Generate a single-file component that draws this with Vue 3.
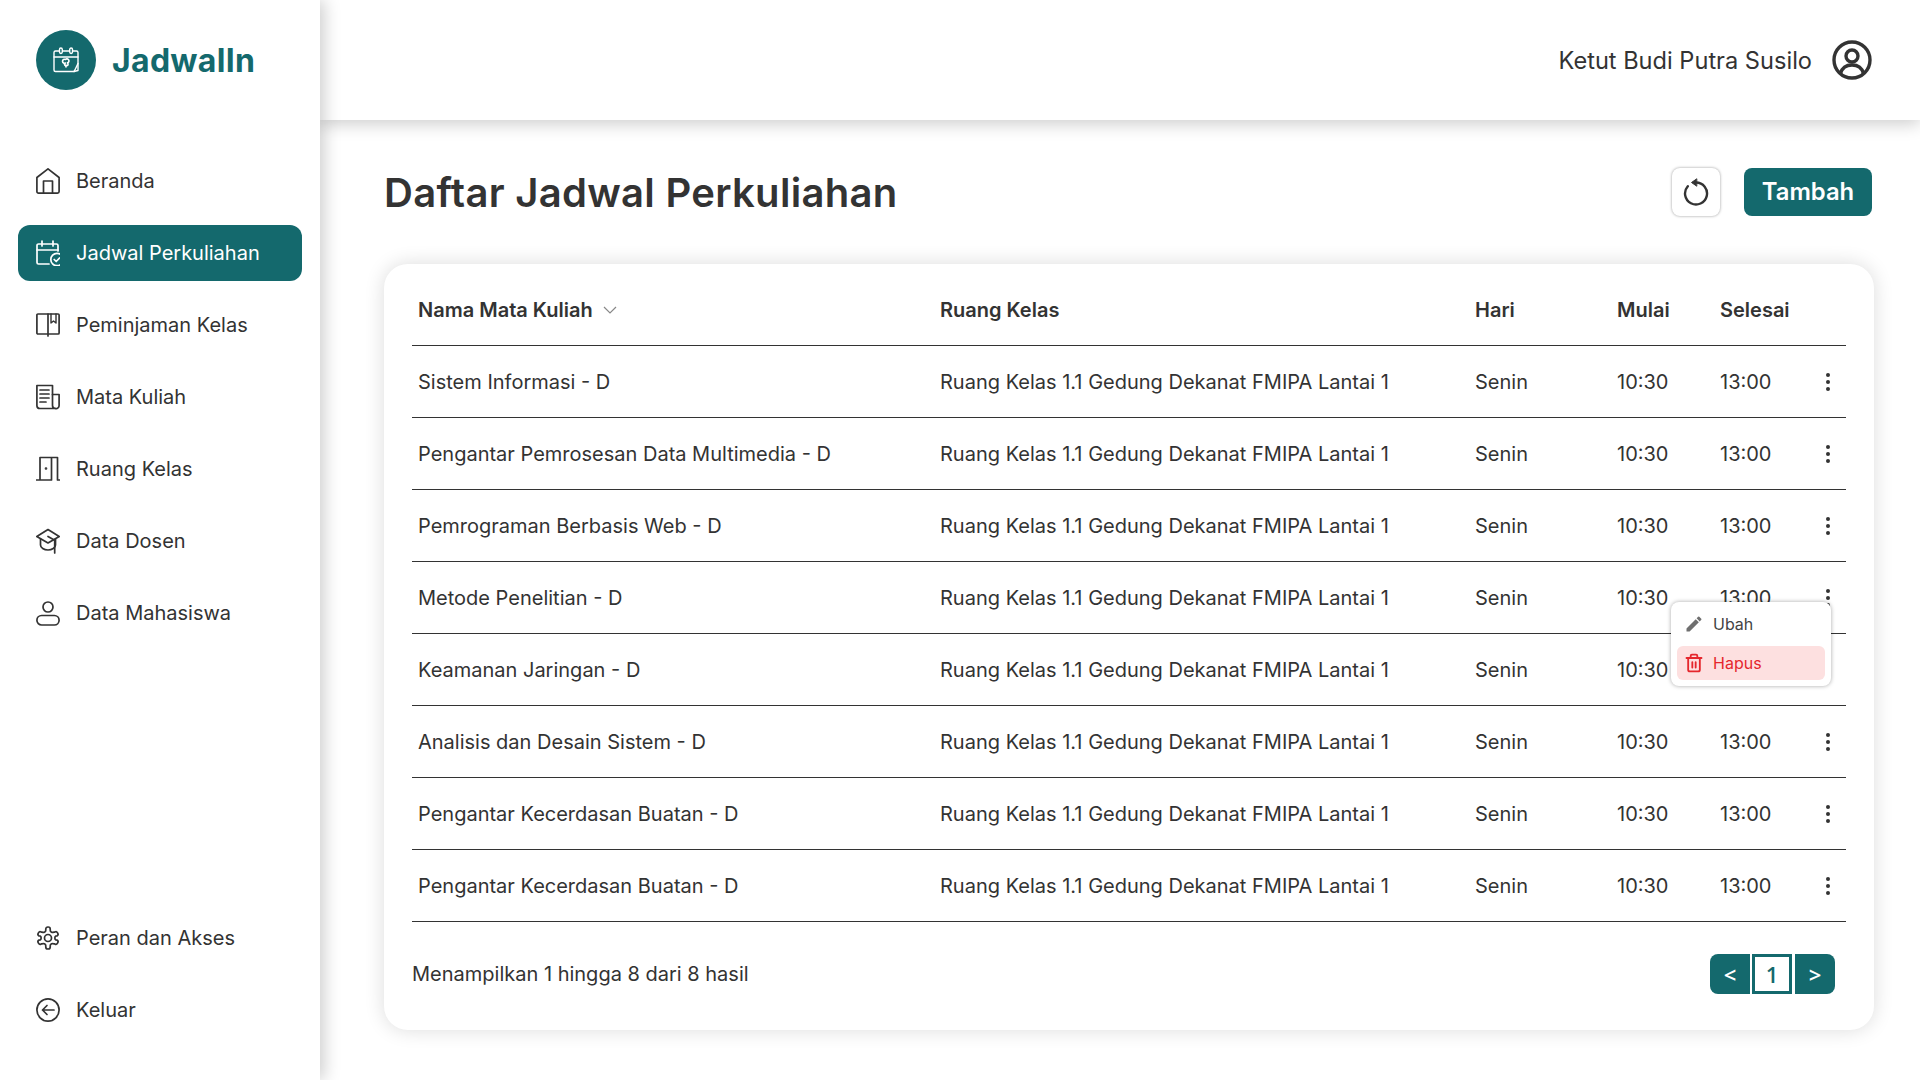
<script setup>
const topNav = [
  { label: 'Beranda', icon: 'home' },
  { label: 'Jadwal Perkuliahan', icon: 'calendar', active: true },
  { label: 'Peminjaman Kelas', icon: 'book' },
  { label: 'Mata Kuliah', icon: 'scroll' },
  { label: 'Ruang Kelas', icon: 'door' },
  { label: 'Data Dosen', icon: 'cap' },
  { label: 'Data Mahasiswa', icon: 'user' }
]
const bottomNav = [
  { label: 'Peran dan Akses', icon: 'gear' },
  { label: 'Keluar', icon: 'exit' }
]
const courses = [
  'Sistem Informasi - D',
  'Pengantar Pemrosesan Data Multimedia - D',
  'Pemrograman Berbasis Web - D',
  'Metode Penelitian - D',
  'Keamanan Jaringan - D',
  'Analisis dan Desain Sistem - D',
  'Pengantar Kecerdasan Buatan - D',
  'Pengantar Kecerdasan Buatan - D'
]
</script>

<template>
  <div class="app">
    <aside class="sidebar">
      <div class="brand">
        <div class="logo">
          <svg width="28" height="28" viewBox="0 0 28 28" fill="none" stroke="#fff" stroke-width="1.4" stroke-linecap="round" stroke-linejoin="round">
            <path d="M7 5H3.500A1.500 1.500 0 0 0 2 6.500V24a1.500 1.500 0 0 0 1.500 1.500H22l4-1V6.500A1.500 1.500 0 0 0 24.500 5H21" />
            <path d="M11 5h6M2 11h24M22 25.500c1.500-2 2.500-5 4-8" />
            <rect x="7.500" y="2" width="2.800" height="5.500" rx="1.400" />
            <rect x="17.700" y="2" width="2.800" height="5.500" rx="1.400" />
            <path d="M13.500 17a2 2 0 1 1 0-3.500 2 2 0 1 1 2 3.300 1.800 1.800 0 1 1-3 1.700 1.800 1.800 0 0 1 1-1.500zM14 19v2" stroke-width="1.600" />
          </svg>
        </div>
        <span class="brand-name">JadwalIn</span>
      </div>

      <nav class="nav">
        <a v-for="item in topNav" :key="item.label" class="nav-item" :class="{ active: item.active }">
          <svg class="nav-icon" viewBox="0 0 24 26" fill="none" stroke="currentColor" stroke-width="1.700" stroke-linecap="round" stroke-linejoin="round">
            <template v-if="item.icon === 'home'">
              <path d="M.9 9.500 12 .8l11.100 8.700V23.500a1.600 1.600 0 0 1-1.600 1.600h-19A1.600 1.600 0 0 1 .9 23.500V9.500Z" />
              <path d="M7.500 25V13h9v12" />
            </template>
            <template v-else-if="item.icon === 'calendar'">
              <path d="M22 11V5.500A1.500 1.500 0 0 0 20.500 4h-18A1.500 1.500 0 0 0 1 5.500v17A1.500 1.500 0 0 0 2.500 24H13" />
              <path d="M1 10h21M6 1v5M17 1v5" />
              <circle cx="21" cy="19.500" r="6.200" />
              <path d="m18.200 19.500 2 2 3.300-3.500" />
            </template>
            <template v-else-if="item.icon === 'book'">
              <rect x=".9" y="2" width="22.200" height="20" rx="1" />
              <path d="M12 2v22" />
              <path d="M15 2v9l2.500-2 2.500 2V2" stroke-width="1.400" />
            </template>
            <template v-else-if="item.icon === 'scroll'">
              <path d="M.9 1.500H16.500V21.500c0 1.800 1.300 3 3 3H4a3.100 3.100 0 0 1-3.100-3.100V1.500Z" />
              <path d="M16.500 10.500h6.600v11a3 3 0 0 1-3.600 3" />
              <path d="M4 6h9M4 10h9M4 14h9M4 18h6" />
            </template>
            <template v-else-if="item.icon === 'door'">
              <path d="M.5 24h15V1.500H4V24M15.500 1.500h6V24h2.300" />
              <circle cx="10" cy="12.500" r=".5" fill="currentColor" />
            </template>
            <template v-else-if="item.icon === 'cap'">
              <path d="M12 1.500.8 8.500 12 15l11.200-6.500L12 1.500Z" />
              <path d="M4.500 11v6c0 2.800 3.500 5 7.500 5s7.500-2.200 7.500-5v-6" />
              <path d="M12 8.500l6.700 3.700V25" />
            </template>
            <template v-else>
              <circle cx="12" cy="7" r="5" />
              <rect x=".9" y="15.500" width="22.200" height="9.500" rx="4.750" />
            </template>
          </svg>
          <span>{{ item.label }}</span>
        </a>
      </nav>

      <nav class="nav nav-bottom">
        <a v-for="item in bottomNav" :key="item.label" class="nav-item">
          <svg class="nav-icon" viewBox="0 0 24 26" fill="none" stroke="currentColor" stroke-width="1.700" stroke-linecap="round" stroke-linejoin="round">
            <template v-if="item.icon === 'gear'">
              <g transform="translate(0 1)">
                <path d="M12.220 1h-.440a2 2 0 0 0-2 2v1.180a2 2 0 0 1-1 1.730l-.430.250a2 2 0 0 1-2 0l-1.150-.080a2 2 0 0 0-2.730.730l-.220.380a2 2 0 0 0 .730 2.730l1.150.100a2 2 0 0 1 1 1.720v.510a2 2 0 0 1-1 1.740l-1.150.090a2 2 0 0 0-.730 2.730l.220.380a2 2 0 0 0 2.730.730l1.150-.080a2 2 0 0 1 2 0l.430.250a2 2 0 0 1 1 1.730V21a2 2 0 0 0 2 2h.440a2 2 0 0 0 2-2v-1.180a2 2 0 0 1 1-1.730l.430-.250a2 2 0 0 1 2 0l1.150.080a2 2 0 0 0 2.730-.730l.220-.390a2 2 0 0 0-.730-2.730l-1.150-.080a2 2 0 0 1-1-1.740v-.500a2 2 0 0 1 1-1.740l1.150-.090a2 2 0 0 0 .730-2.730l-.220-.380a2 2 0 0 0-2.730-.730l-1.150.080a2 2 0 0 1-2 0l-.430-.250a2 2 0 0 1-1-1.730V3a2 2 0 0 0-2-2z" />
                <circle cx="12" cy="12" r="3.500" />
              </g>
            </template>
            <template v-else>
              <circle cx="12" cy="13" r="11.100" />
              <path d="M18 13H6.500M11 8.500 6.500 13l4.500 4.500" />
            </template>
          </svg>
          <span>{{ item.label }}</span>
        </a>
      </nav>
    </aside>

    <div class="main">
      <header class="topbar">
        <span class="username">Ketut Budi Putra Susilo</span>
        <svg width="40" height="40" viewBox="0 0 40 40" fill="none" stroke="#333" stroke-width="3.400">
          <circle cx="20" cy="20" r="18" />
          <circle cx="20" cy="16" r="6" />
          <path d="M8.500 33.500c1.500-5.500 6-8.500 11.500-8.500s10 3 11.500 8.500" />
        </svg>
      </header>

      <main class="content">
        <div class="title-row">
          <h1 class="title">Daftar Jadwal Perkuliahan</h1>
          <div class="actions">
            <button class="refresh" type="button" aria-label="Muat ulang">
              <svg width="28" height="28" viewBox="0 0 28 28" fill="none" stroke="#333" stroke-width="2.400" stroke-linecap="round" stroke-linejoin="round">
                <path d="M14 4.500a11 11 0 1 1-8.200 3.700" />
                <path d="M14.500 1 9.500 4.500l5 3.500Z" fill="#333" stroke-width="1" />
              </svg>
            </button>
            <button class="add" type="button">Tambah</button>
          </div>
        </div>

        <section class="card">
          <div class="table">
            <div class="row head">
              <div class="cell sort">
                Nama Mata Kuliah
                <svg width="14" height="8" viewBox="0 0 14 8" fill="none" stroke="#888" stroke-width="1.200"><path d="m1 1 6 6 6-6" /></svg>
              </div>
              <div class="cell">Ruang Kelas</div>
              <div class="cell">Hari</div>
              <div class="cell">Mulai</div>
              <div class="cell">Selesai</div>
              <div class="cell"></div>
            </div>
            <div v-for="(course, i) in courses" :key="i" class="row">
              <div class="cell">{{ course }}</div>
              <div class="cell">Ruang Kelas 1.1 Gedung Dekanat FMIPA Lantai 1</div>
              <div class="cell">Senin</div>
              <div class="cell">10:30</div>
              <div class="cell">13:00</div>
              <div class="cell dots-cell"><span class="dots"><i></i><i></i><i></i></span></div>
              <div v-if="i === 3" class="menu">
                <div class="menu-item">
                  <svg width="20" height="20" viewBox="0 0 24 24" fill="#6f6f6f"><path d="M3 17.250V21h3.750L17.810 9.940l-3.750-3.750L3 17.250zM20.710 7.040a1 1 0 0 0 0-1.410l-2.340-2.340a1 1 0 0 0-1.410 0l-1.830 1.830 3.750 3.750 1.830-1.830z" /></svg>
                  Ubah
                </div>
                <div class="menu-item danger">
                  <svg width="20" height="20" viewBox="0 0 24 24" fill="none" stroke="#e5272d" stroke-width="2.200" stroke-linecap="round" stroke-linejoin="round"><path d="M3 6h18M8 6V3.500A1.500 1.500 0 0 1 9.500 2h5A1.500 1.500 0 0 1 16 3.500V6M5 6v14a2 2 0 0 0 2 2h10a2 2 0 0 0 2-2V6M10 11v6.500M14 11v6.500" /></svg>
                  Hapus
                </div>
              </div>
            </div>
          </div>
          <div class="footer">
            <span>Menampilkan 1 hingga 8 dari 8 hasil</span>
            <div class="pager">
              <span class="page nav-prev">&lt;</span>
              <span class="page current">1</span>
              <span class="page nav-next">&gt;</span>
            </div>
          </div>
        </section>
      </main>
    </div>
  </div>
</template>

<style scoped>
.app {
  display: flex;
  width: 1920px;
  height: 1080px;
  overflow: hidden;
  background: #fff;
  color: #333;
  font-family: Inter, "Noto Sans", sans-serif;
  font-size: 20px;
}
.sidebar {
  position: relative;
  z-index: 2;
  flex: 0 0 320px;
  display: flex;
  flex-direction: column;
  padding: 30px 18px 42px;
  box-sizing: border-box;
  background: #fff;
  box-shadow: 4px 0 16px rgba(0, 0, 0, 0.2);
}
.brand {
  display: flex;
  align-items: center;
  gap: 16px;
  padding-left: 18px;
  margin-bottom: 63px;
}
.logo {
  width: 60px;
  height: 60px;
  border-radius: 50%;
  background: #14696d;
  display: flex;
  align-items: center;
  justify-content: center;
}
.brand-name {
  font-size: 32px;
  font-weight: 700;
  letter-spacing: 0.3px;
  color: #14696d;
}
.nav {
  display: flex;
  flex-direction: column;
  gap: 16px;
}
.nav-bottom {
  margin-top: auto;
}
.nav-item {
  display: flex;
  align-items: center;
  gap: 16px;
  height: 56px;
  padding-left: 18px;
  border-radius: 12px;
}
.nav-item.active {
  background: #14696d;
  color: #fff;
}
.nav-icon {
  width: 24px;
  height: 26px;
  flex: none;
}
.main {
  flex: 1;
  min-width: 0;
  display: flex;
  flex-direction: column;
}
.topbar {
  position: relative;
  z-index: 1;
  height: 120px;
  flex: none;
  display: flex;
  align-items: center;
  justify-content: flex-end;
  gap: 20px;
  padding-right: 48px;
  background: #fff;
  box-shadow: 0 4px 16px rgba(0, 0, 0, 0.2);
  font-size: 23.600px;
}
.content {
  padding: 48px 46px 0 64px;
}
.title-row {
  display: flex;
  align-items: center;
  justify-content: space-between;
  height: 48px;
  padding-right: 2px;
  margin-bottom: 48px;
}
.title {
  margin: 0;
  font-size: 40px;
  font-weight: 600;
  letter-spacing: 0.3px;
  color: #333;
}
.actions {
  display: flex;
  align-items: center;
  gap: 24px;
}
.refresh {
  width: 48px;
  height: 48px;
  padding: 0;
  display: flex;
  align-items: center;
  justify-content: center;
  background: #fff;
  border: none;
  border-radius: 8px;
  box-shadow: 0 0 3px rgba(0, 0, 0, 0.4);
}
.add {
  width: 128px;
  height: 48px;
  padding: 0 0 2px;
  border: none;
  border-radius: 8px;
  background: #14696d;
  color: #fff;
  font-family: inherit;
  font-size: 23.800px;
  font-weight: 600;
}
.card {
  height: 766px;
  box-sizing: border-box;
  padding: 10px 28px 0;
  border-radius: 24px;
  background: #fff;
  box-shadow: 0 0 20px rgba(0, 0, 0, 0.14);
}
.row {
  position: relative;
  display: grid;
  grid-template-columns: 522px 535px 142px 103px 105px 18px;
  height: 72px;
  box-sizing: border-box;
  border-bottom: 1px solid #333;
  align-items: center;
}
.head {
  font-weight: 600;
}
.cell {
  padding-left: 6px;
  white-space: nowrap;
}
.sort {
  display: flex;
  align-items: center;
  gap: 10px;
}
.dots-cell {
  padding-left: 0;
  display: flex;
  justify-content: center;
}
.dots {
  display: flex;
  flex-direction: column;
  gap: 3px;
}
.dots i {
  width: 4px;
  height: 4px;
  border-radius: 50%;
  background: #333;
}
.menu {
  position: absolute;
  left: 1259px;
  top: 40px;
  width: 160px;
  height: 84px;
  box-sizing: border-box;
  padding: 6px;
  z-index: 3;
  background: #fff;
  border-radius: 8px;
  box-shadow: 0 0 4px rgba(0, 0, 0, 0.35);
  font-size: 16px;
  display: flex;
  flex-direction: column;
  gap: 6px;
}
.menu-item {
  height: 33px;
  display: flex;
  align-items: center;
  gap: 9px;
  padding-left: 7px;
  border-radius: 6px;
  color: #444;
}
.menu-item:first-child {
  margin-top: -1px;
}
.menu-item.danger {
  height: 34px;
  background: #fde0e0;
  color: #e5272d;
}
.footer {
  display: flex;
  align-items: center;
  justify-content: space-between;
  height: 40px;
  margin-top: 32px;
  padding-right: 11px;
}
.pager {
  display: flex;
  gap: 2px;
  font-family: "Open Sans", "Noto Sans", sans-serif;
  font-size: 22px;
  font-weight: 600;
}
.page {
  width: 40px;
  height: 40px;
  box-sizing: border-box;
  display: flex;
  align-items: center;
  justify-content: center;
  background: #14696d;
  color: #fff;
}
.nav-prev {
  border-radius: 8px 0 0 8px;
}
.nav-next {
  border-radius: 0 8px 8px 0;
  margin-left: 1px;
}
.current {
  background: #fff;
  color: #14696d;
  border: 3px solid #14696d;
}
</style>
